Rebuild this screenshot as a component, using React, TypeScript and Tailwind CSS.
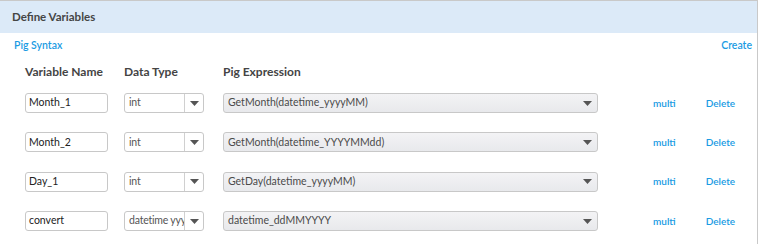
import { Fragment } from 'react';

const rows = [
  { name: 'Month_1', type: 'int', expr: 'GetMonth(datetime_yyyyMM)' },
  { name: 'Month_2', type: 'int', expr: 'GetMonth(datetime_YYYYMMdd)' },
  { name: 'Day_1', type: 'int', expr: 'GetDay(datetime_yyyyMM)' },
  { name: 'convert', type: 'datetime yyyyMM', expr: 'datetime_ddMMYYYY' },
];

function Caret() {
  return (
    <svg width="9" height="5" viewBox="0 0 9 5" className="shrink-0">
      <path d="M0 0h9L4.5 5z" fill="#555" />
    </svg>
  );
}

export default function App() {
  return (
    <div className="h-[244px] w-[760px] bg-white font-['Lato',sans-serif]">
      <div className="h-[244px] w-[758px] border-t border-r border-[#c9c9c9]">
        {/* Header */}
        <div className="flex h-[32px] items-center bg-[#dceaf8] px-3 text-[11.5px] font-bold text-[#454545]">
          Define Variables
        </div>

        <div className="flex items-center justify-between pr-[5px] pl-[14px] pt-[5px] text-[10.5px] leading-[14px] font-semibold text-[#1a9be3]">
          <span>Pig Syntax</span>
          <span>Create</span>
        </div>

        {/* Column headers */}
        <div className="mt-[12px] flex pl-[25px] text-[12px] leading-[16px] font-bold text-[#444]">
          <span className="w-[99px]">Variable Name</span>
          <span className="w-[99px]">Data Type</span>
          <span>Pig Expression</span>
        </div>

        <div className="mt-[13px] flex flex-col gap-[19.4px] pl-[25px]">
          {rows.map((row) => (
            <Fragment key={row.name}>
              <div className="flex h-[20px] items-center text-[10.5px]">
                <div className="flex h-[20px] w-[83px] items-center rounded-[3px] border border-[#c8c8c8] bg-white px-[3px] text-[#222]">
                  {row.name}
                </div>
                <div className="ml-[16px] flex h-[20px] w-[80px] items-stretch rounded-[3px] border border-[#c8c8c8] bg-white">
                  <div className="flex min-w-0 flex-1 items-center overflow-hidden pl-[4px] whitespace-nowrap text-[#555]">
                    <span className="tracking-[-0.2px]">{row.type}</span>
                  </div>
                  <div className="flex w-[19px] shrink-0 items-center justify-center border-l border-[#d0d0d0]">
                    <Caret />
                  </div>
                </div>
                <div className="ml-[19px] flex h-[20px] w-[375px] items-center justify-between rounded-[3px] border border-[#c8c8c8] bg-gradient-to-b from-[#f3f3f5] to-[#e8e9ec] pr-[5px] pl-[4px] text-[#4a4a4a]">
                  <span>{row.expr}</span>
                  <Caret />
                </div>
                <span className="ml-[55px] text-[10px] font-semibold text-[#1a9be3]">multi</span>
                <span className="ml-[30px] text-[10px] font-semibold text-[#1a9be3]">Delete</span>
              </div>
            </Fragment>
          ))}
        </div>
      </div>
    </div>
  );
}
